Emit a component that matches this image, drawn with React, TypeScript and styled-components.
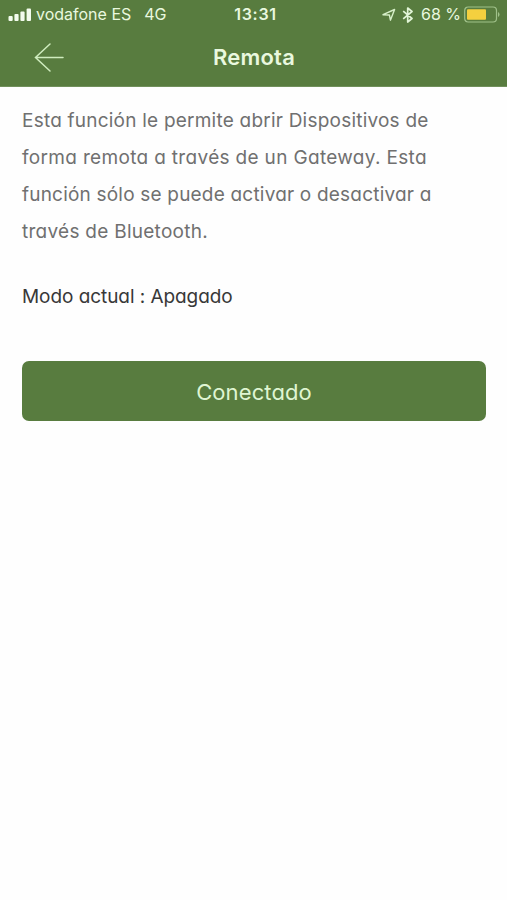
import React from "react";
import styled, { createGlobalStyle } from "styled-components";

const GlobalStyle = createGlobalStyle`
  * { box-sizing: border-box; }
  body { margin: 0; background: #fefefe; }
`;

const Screen = styled.div`
  min-height: 900px;
  display: flex;
  flex-direction: column;
  background: #fefefe;
  font-family: Inter, "Liberation Sans", sans-serif;
`;

const Header = styled.header`
  height: 87px;
  background: #587c3f;
  color: #e9f8df;
  border-bottom: 1px solid #71905c;
`;

const StatusBar = styled.div`
  display: grid;
  grid-template-columns: 1fr auto 1fr;
  align-items: center;
  height: 29px;
  padding: 0 7px 0 8px;
  font-size: 16px;
  line-height: 29px;
  white-space: pre;
`;

const StatusGroup = styled.div<{ $end?: boolean }>`
  display: flex;
  align-items: center;
  justify-content: ${(p) => (p.$end ? "flex-end" : "flex-start")};
`;

const StatusText = styled.span<{ $spacing?: number; $left?: number; $bold?: boolean }>`
  margin-left: ${(p) => p.$left ?? 0}px;
  letter-spacing: ${(p) => p.$spacing ?? 0}px;
  font-weight: ${(p) => (p.$bold ? 600 : 400)};
`;

const Glyph = styled.svg<{ $left?: number }>`
  display: block;
  flex: none;
  margin-left: ${(p) => p.$left ?? 0}px;
`;

const NavBar = styled.nav`
  display: grid;
  grid-template-columns: 64px 1fr 64px;
  align-items: center;
  height: 57px;
`;

const BackButton = styled.button`
  display: flex;
  padding: 0 0 0 34px;
  border: 0;
  background: none;
  color: #cfecbe;
`;

const Title = styled.h1`
  margin: 0;
  padding-left: 1px;
  text-align: center;
  font-size: 22px;
  font-weight: 600;
  letter-spacing: 0.2px;
  line-height: 57px;
`;

const Content = styled.main`
  padding: 15px 21px 0 22px;
  font-feature-settings: "cv11";
`;

const Description = styled.p`
  margin: 0;
  color: #707070;
  font-size: 19px;
  font-weight: 400;
  line-height: 37.1px;
`;

const Line = styled.span<{ $spacing: number }>`
  display: block;
  white-space: nowrap;
  letter-spacing: ${(p) => p.$spacing}px;
`;

const Mode = styled.p`
  margin: 27.4px 0 0;
  color: #383838;
  font-size: 19px;
  font-weight: 400;
  letter-spacing: -0.06px;
  line-height: 37px;
`;

const ActionButton = styled.button`
  display: block;
  width: 100%;
  height: 60px;
  margin-top: 46px;
  padding: 2px 0 0;
  border: 0;
  border-radius: 7px;
  background: #587c3f;
  color: #dff5d2;
  font: 400 22px Inter, sans-serif;
  letter-spacing: 0.1px;
  font-feature-settings: "cv11";
`;

const description = [
  { text: "Esta función le permite abrir Dispositivos de", spacing: 0.22 },
  { text: "forma remota a través de un Gateway. Esta", spacing: 0.33 },
  { text: "función sólo se puede activar o desactivar a", spacing: 0.2 },
  { text: "través de Bluetooth.", spacing: 0.27 },
];

const SignalIcon = () => (
  <Glyph width="24" height="14" viewBox="0 0 24 14" fill="#f3fcee">
    <rect x="0.5" y="8" width="4.2" height="5" rx="1" />
    <rect x="6.4" y="6" width="4.2" height="7" rx="1" />
    <rect x="12.4" y="3.5" width="4.2" height="9.5" rx="1" />
    <rect x="18.6" y="0.5" width="4.4" height="12.5" rx="1" />
  </Glyph>
);

const LocationIcon = () => (
  <Glyph width="14" height="14" viewBox="0 0 14 14" fill="none" stroke="#d6efc8" strokeWidth="1.4" strokeLinejoin="round">
    <path d="M1 6.7 12.6 1.5 8.4 12.2 7.4 7Z" />
  </Glyph>
);

const BluetoothIcon = () => (
  <Glyph $left={6} width="12" height="16" viewBox="0 0 12 16" fill="none" stroke="#e2f5d7" strokeWidth="1.7" strokeLinejoin="round">
    <path d="M1.2 4.2 10 11.5 5.7 15V1L10 4.5 1.2 11.8" />
  </Glyph>
);

const BatteryIcon = () => (
  <Glyph $left={3} width="36" height="17" viewBox="0 0 36 17">
    <rect x="0.7" y="1" width="31.8" height="15" rx="3.5" fill="none" stroke="#a0c18a" strokeWidth="1.2" />
    <rect x="3" y="3.3" width="19" height="10.4" rx="1" fill="#f4d03f" />
    <path d="M34 6v5q1.5-.8 1.5-2.5T34 6Z" fill="#a0c18a" />
  </Glyph>
);

export default function App() {
  return (
    <Screen>
      <GlobalStyle />
      <Header>
        <StatusBar>
          <StatusGroup>
            <SignalIcon />
            <StatusText $left={4}>vodafone ES</StatusText>
            <StatusText $left={13}>4G</StatusText>
          </StatusGroup>
          <StatusText $bold $spacing={0.7} $left={3}>13:31</StatusText>
          <StatusGroup $end>
            <LocationIcon />
            <BluetoothIcon />
            <StatusText $left={7}>68 %</StatusText>
            <BatteryIcon />
          </StatusGroup>
        </StatusBar>
        <NavBar>
          <BackButton aria-label="Atrás">
            <Glyph width="30" height="30" viewBox="0 0 30 30" fill="none" stroke="currentColor" strokeWidth="1.5" strokeLinecap="round">
              <path d="M29 14.5H1.5M16 1 1.5 14.5 16 28" />
            </Glyph>
          </BackButton>
          <Title>Remota</Title>
        </NavBar>
      </Header>
      <Content>
        <Description>
          {description.map((line) => (
            <Line key={line.text} $spacing={line.spacing}>
              {line.text}{" "}
            </Line>
          ))}
        </Description>
        <Mode>Modo actual : Apagado</Mode>
        <ActionButton>Conectado</ActionButton>
      </Content>
    </Screen>
  );
}
